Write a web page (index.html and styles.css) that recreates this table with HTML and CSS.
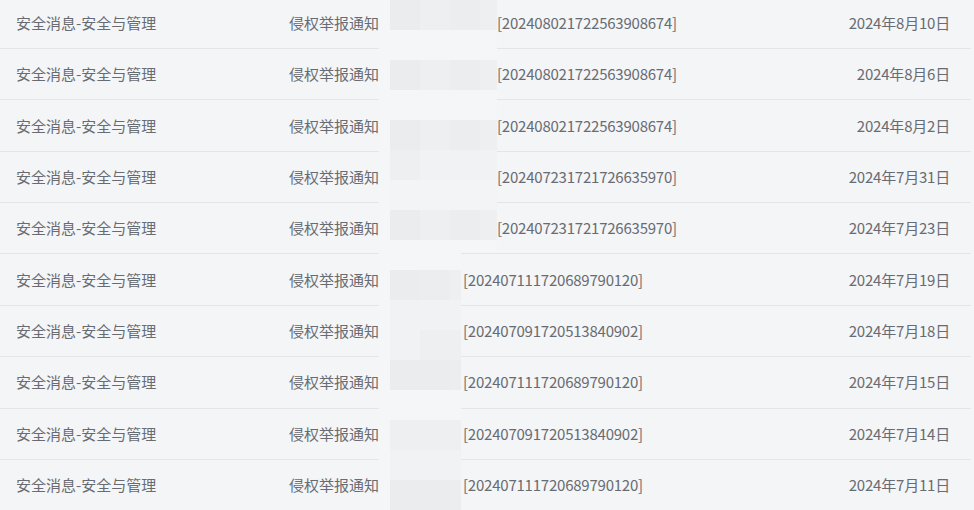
FILE: index.html
```html
<!DOCTYPE html>
<html lang="zh-CN">
<head>
<meta charset="utf-8">
<link rel="stylesheet" href="styles.css">
</head>
<body>
<div class="list">
  <div class="row"><span class="cat">安全消息-安全与管理</span><span class="type">侵权举报通知</span><span class="name wide"></span><span class="id">[202408021722563908674]</span><span class="date">2024年8月10日</span></div>
  <div class="row"><span class="cat">安全消息-安全与管理</span><span class="type">侵权举报通知</span><span class="name wide"></span><span class="id">[202408021722563908674]</span><span class="date">2024年8月6日</span></div>
  <div class="row"><span class="cat">安全消息-安全与管理</span><span class="type">侵权举报通知</span><span class="name wide"></span><span class="id">[202408021722563908674]</span><span class="date">2024年8月2日</span></div>
  <div class="row"><span class="cat">安全消息-安全与管理</span><span class="type">侵权举报通知</span><span class="name wide"></span><span class="id">[202407231721726635970]</span><span class="date">2024年7月31日</span></div>
  <div class="row"><span class="cat">安全消息-安全与管理</span><span class="type">侵权举报通知</span><span class="name wide"></span><span class="id">[202407231721726635970]</span><span class="date">2024年7月23日</span></div>
  <div class="row"><span class="cat">安全消息-安全与管理</span><span class="type">侵权举报通知</span><span class="name narrow"></span><span class="id">[202407111720689790120]</span><span class="date">2024年7月19日</span></div>
  <div class="row"><span class="cat">安全消息-安全与管理</span><span class="type">侵权举报通知</span><span class="name narrow"></span><span class="id">[202407091720513840902]</span><span class="date">2024年7月18日</span></div>
  <div class="row"><span class="cat">安全消息-安全与管理</span><span class="type">侵权举报通知</span><span class="name narrow"></span><span class="id">[202407111720689790120]</span><span class="date">2024年7月15日</span></div>
  <div class="row"><span class="cat">安全消息-安全与管理</span><span class="type">侵权举报通知</span><span class="name narrow"></span><span class="id">[202407091720513840902]</span><span class="date">2024年7月14日</span></div>
  <div class="row"><span class="cat">安全消息-安全与管理</span><span class="type">侵权举报通知</span><span class="name narrow"></span><span class="id">[202407111720689790120]</span><span class="date">2024年7月11日</span></div>
</div>

<div class="mosaic mosaic-top">
  <i class="b"></i><i class="d"></i><i class="m"></i><i class="d2"></i><i class="m"></i>
  <i class="b"></i><i class="b"></i><i class="b"></i><i class="b"></i><i class="b"></i>
  <i class="b"></i><i class="d"></i><i class="m"></i><i class="d2"></i><i class="m"></i>
  <i class="b"></i><i class="b"></i><i class="b"></i><i class="b"></i><i class="b"></i>
  <i class="b"></i><i class="d"></i><i class="m"></i><i class="d2"></i><i class="m"></i>
  <i class="b"></i><i class="m"></i><i class="l"></i><i class="l"></i><i class="l"></i>
  <i class="b"></i><i class="ll"></i><i class="ll"></i><i class="ll"></i><i class="ll"></i>
  <i class="b"></i><i class="d"></i><i class="m"></i><i class="d2"></i><i class="m"></i>
  <i class="b"></i><i class="b"></i><i class="b"></i><i class="b"></i><i class="b"></i>
</div>
<div class="mosaic mosaic-bottom">
  <i class="b"></i><i class="b"></i><i class="b"></i><i class="b"></i>
  <i class="b"></i><i class="d"></i><i class="d2"></i><i class="m"></i>
  <i class="b"></i><i class="l"></i><i class="l"></i><i class="l"></i>
  <i class="b"></i><i class="l"></i><i class="m"></i><i class="m"></i>
  <i class="b"></i><i class="d"></i><i class="d"></i><i class="d2"></i>
  <i class="b"></i><i class="b"></i><i class="b"></i><i class="b"></i>
  <i class="b"></i><i class="m"></i><i class="m"></i><i class="m"></i>
  <i class="b"></i><i class="l"></i><i class="l"></i><i class="l"></i>
  <i class="b"></i><i class="d"></i><i class="d"></i><i class="d2"></i>
</div>
</body>
</html>
```
FILE: styles.css
```css
html, body {
  margin: 0;
  padding: 0;
  background: #f4f5f7;
}
body {
  position: relative;
  width: 974px;
  height: 510px;
  overflow: hidden;
  font-family: "Noto Sans CJK SC", "Noto Sans", sans-serif;
  font-size: 15px;
  color: #686c72;
}
.list {
  margin-top: -2.4px;
  width: 971px;
}
.row {
  box-sizing: border-box;
  height: 51.375px;
  display: flex;
  align-items: center;
  padding: 0 21px 0 16px;
  border-bottom: 1px solid #e3e5e9;
  line-height: 20px;
  white-space: nowrap;
}
.cat {
  width: 273px;
  flex: none;
}
.type {
  flex: none;
}
.name {
  display: inline-block;
  flex: none;
}
.name.wide { width: 118px; }
.name.narrow { width: 84px; }
.id {
  flex: none;
  letter-spacing: -0.22px;
}
.date {
  margin-left: auto;
  letter-spacing: -0.2px;
}
.mosaic {
  position: absolute;
  left: 379px;
  display: grid;
  overflow: hidden;
  background: #f5f6f8;
}
.mosaic-top {
  top: 0;
  width: 118px;
  height: 252px;
  grid-template-columns: 11px 30px 30px 30px 17px;
  grid-auto-rows: 30px;
}
.mosaic-bottom {
  top: 252px;
  width: 82px;
  height: 258px;
  grid-template-columns: 11px 30px 30px 11px;
  grid-template-rows: 18px;
  grid-auto-rows: 30px;
}
.mosaic i { display: block; }
.mosaic .b { background: #f5f6f8; }
.mosaic .d { background: #ebecee; }
.mosaic .d2 { background: #ecedef; }
.mosaic .m { background: #eeeff1; }
.mosaic .l { background: #f1f2f4; }
.mosaic .ll { background: #f3f4f6; }
```
